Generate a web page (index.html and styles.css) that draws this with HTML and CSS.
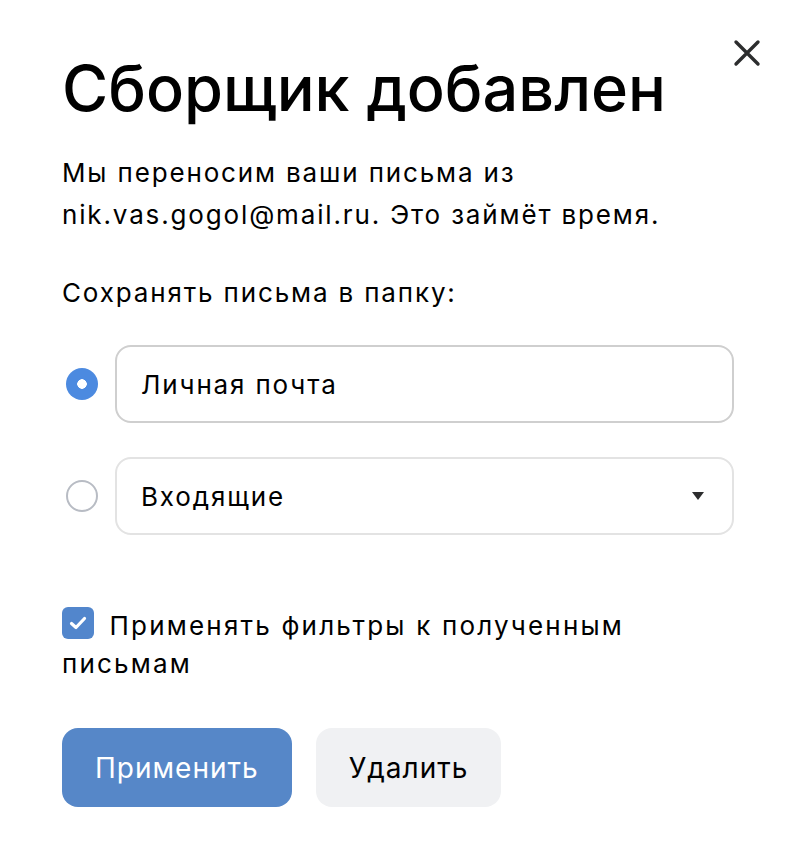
FILE: index.html
```html
<!DOCTYPE html>
<html lang="ru">
<head>
<meta charset="utf-8">
<link rel="stylesheet" href="styles.css">
</head>
<body>
<div class="dialog">
  <button class="close" aria-label="Закрыть">
    <svg width="28" height="28" viewBox="0 0 28 28"><path d="M3 3 L25 25 M25 3 L3 25" stroke="#2c2d2e" stroke-width="3.4" stroke-linecap="round"/></svg>
  </button>
  <h1 class="title">Сборщик добавлен</h1>
  <p class="text">Мы переносим ваши письма из<br>nik.vas.gogol@mail.ru. Это займёт время.</p>
  <p class="label">Сохранять письма в папку:</p>
  <div class="option">
    <span class="radio checked"></span>
    <div class="field">Личная почта</div>
  </div>
  <div class="option">
    <span class="radio"></span>
    <div class="field select">Входящие<span class="arrow"></span></div>
  </div>
  <div class="check">
    <span class="box"><svg width="32" height="32" viewBox="0 0 32 32"><path d="M9.5 16.5 L14 20.5 L22.5 11.5" fill="none" stroke="#fff" stroke-width="3.2" stroke-linecap="round" stroke-linejoin="round"/></svg></span>
    <span class="check-text">Применять фильтры к полученным письмам</span>
  </div>
  <div class="buttons">
    <button class="btn primary">Применить</button>
    <button class="btn secondary">Удалить</button>
  </div>
</div>
</body>
</html>
```
FILE: styles.css
```css
* { box-sizing: border-box; }
body {
  margin: 0;
  background: #fff;
  font-family: Inter, "Liberation Sans", sans-serif;
  color: #000;
}
.dialog {
  position: relative;
  padding: 44px 66px 0 62px;
}
.close {
  position: absolute;
  top: 39px;
  right: 39px;
  border: 0;
  background: none;
  padding: 0;
  width: 28px;
  height: 28px;
}
.title {
  margin: 0;
  font-family: Inter, sans-serif;
  font-weight: 500;
  font-size: 63px;
  line-height: 88px;
  letter-spacing: 0;
}
.text, .label, .field, .check {
  font-size: 26px;
  letter-spacing: 1.85px;
}
.text {
  margin: 20px 0 0;
  line-height: 42px;
}
.label {
  margin: 36px 0 0;
  line-height: 42px;
}
.option {
  display: flex;
  align-items: center;
  gap: 17px;
  margin-top: 31px;
}
.option + .option { margin-top: 34px; }
.radio {
  width: 32px;
  height: 32px;
  border-radius: 50%;
  border: 2px solid #b8bcc4;
  flex: none;
  margin-left: 4px;
}
.radio.checked {
  border: 0;
  background: radial-gradient(circle, #fff 0 4.5px, #4c8ae0 5px);
}
.field {
  flex: 1;
  height: 78px;
  border: 2px solid #cfcfcf;
  border-radius: 16px;
  display: flex;
  align-items: center;
  padding: 0 24px;
}
.field.select {
  border-color: #e3e3e3;
  justify-content: space-between;
}
.arrow {
  width: 0;
  height: 0;
  border-left: 6px solid transparent;
  border-right: 6px solid transparent;
  border-top: 8px solid #2c2d2e;
  margin-right: 4px;
}
.check {
  margin-top: 72px;
  line-height: 38px;
  padding-right: 40px;
  letter-spacing: 2.2px;
}
.box {
  display: inline-flex;
  vertical-align: -4px;
  align-items: center;
  justify-content: center;
  width: 32px;
  height: 32px;
  border-radius: 6px;
  background: #5286cc;
  margin-right: 6px;
}
.buttons {
  display: flex;
  gap: 24px;
  margin-top: 45px;
}
.btn {
  height: 79px;
  border: 0;
  border-radius: 16px;
  font-family: Inter, "Liberation Sans", sans-serif;
  font-size: 28px;
  letter-spacing: 1px;
  padding: 0 33px;
}
.primary { background: #5687c8; color: #fff; }
.secondary { background: #f0f1f3; color: #000; }
```
